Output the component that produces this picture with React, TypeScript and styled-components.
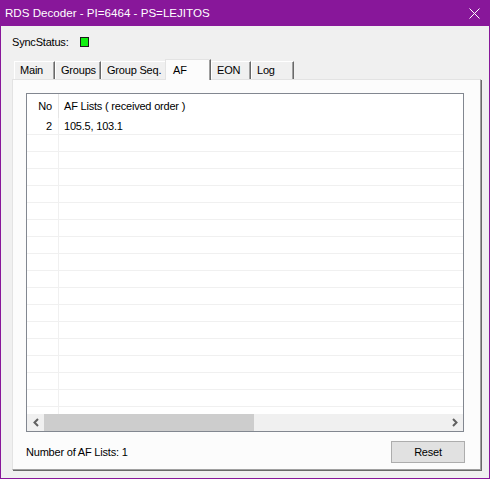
import React from 'react';
import styled, { createGlobalStyle } from 'styled-components';

const Global = createGlobalStyle`
  html, body { margin: 0; padding: 0; background: #f0f0f0; }
  body {
    font-family: "Liberation Sans", Arial, sans-serif;
    font-size: 11px;
    color: #000;
  }
  * { box-sizing: border-box; }
`;

const Window = styled.div`
  width: 490px;
  height: 479px;
  display: flex;
  flex-direction: column;
  border: 1px solid #88179a;
  border-top: none;
  background: #f0f0f0;
`;

const TitleBar = styled.div`
  height: 26px;
  flex: none;
  display: flex;
  align-items: center;
  justify-content: space-between;
  padding: 0 9px 0 4px;
  background: #88179a;
  color: #fff;
  font-size: 11.6px;
`;

const TitleText = styled.span`
  line-height: 26px;
  white-space: nowrap;
`;

const CloseIcon = styled.svg`
  display: block;
  width: 11px;
  height: 11px;
`;

const Client = styled.div`
  flex: 1;
  display: flex;
  flex-direction: column;
  padding: 8px 0 0 0;
`;

const SyncRow = styled.div`
  display: flex;
  align-items: center;
  height: 15px;
  padding-left: 11px;
`;

const Label = styled.span`
  letter-spacing: -0.2px;
  white-space: nowrap;
`;

const SyncLabel = styled(Label)`
  width: 68px;
`;

const Led = styled.div<{ $on: boolean }>`
  width: 9px;
  height: 10px;
  border: 1px solid #1a1a1a;
  background: ${(p) => (p.$on ? '#10f010' : '#c00000')};
`;

const TabStrip = styled.div`
  display: flex;
  align-items: flex-end;
  height: 20px;
  margin: 10px 0 0 13px;
  position: relative;
  z-index: 1;
`;

const Tab = styled.div<{ $w: number; $active?: boolean }>`
  width: ${(p) => p.$w}px;
  height: ${(p) => (p.$active ? 21 : 18)}px;
  margin-left: ${(p) => (p.$active ? -2 : 0)}px;
  margin-bottom: ${(p) => (p.$active ? -1 : 0)}px;
  padding: ${(p) => (p.$active ? '2px 0 0 7px' : '0 0 0 5px')};
  line-height: 17px;
  letter-spacing: -0.2px;
  white-space: nowrap;
  background: ${(p) => (p.$active ? '#fcfcfc' : '#f0f0f0')};
  border-top: 1px solid ${(p) => (p.$active ? '#e3e3e3' : '#ffffff')};
  border-left: 1px solid ${(p) => (p.$active ? '#e3e3e3' : '#ffffff')};
  border-right: 1px solid #696969;
  box-shadow: inset -1px 0 0 #a0a0a0;
`;

const Panel = styled.div`
  margin-left: 11px;
  width: 469px;
  height: 391px;
  background: #fcfcfc;
  border-top: 1px solid #e3e3e3;
  border-left: 1px solid #e3e3e3;
  border-right: 1px solid #a0a0a0;
  border-bottom: 1px solid #a0a0a0;
  box-shadow: 1px 1px 0 #696969;
  padding: 13px 0 0 13px;
  display: flex;
  flex-direction: column;
`;

const ListView = styled.div`
  width: 438px;
  height: 339px;
  border: 1px solid #828790;
  background: #fff;
  display: flex;
  flex-direction: column;
  overflow: hidden;
`;

const HeaderRow = styled.div`
  display: grid;
  grid-template-columns: 32px 1fr;
  height: 24px;
  flex: none;
`;

const HeaderCell = styled.div<{ $right?: boolean; $divider?: boolean }>`
  line-height: 24px;
  white-space: nowrap;
  letter-spacing: -0.2px;
  text-align: ${(p) => (p.$right ? 'right' : 'left')};
  padding: ${(p) => (p.$right ? '0 6px 0 0' : '0 0 0 5px')};
  border-right: ${(p) => (p.$divider ? '1px solid #e5e5e5' : 'none')};
`;

const Rows = styled.div`
  flex: 1;
  overflow: hidden;
`;

const Row = styled.div`
  display: grid;
  grid-template-columns: 32px 1fr;
  height: 17px;
  border-bottom: 1px solid #f0f0f0;
`;

const Cell = styled.div<{ $right?: boolean; $divider?: boolean }>`
  line-height: 17px;
  white-space: nowrap;
  letter-spacing: -0.2px;
  text-align: ${(p) => (p.$right ? 'right' : 'left')};
  padding: ${(p) => (p.$right ? '0 6px 0 0' : '0 0 0 5px')};
  border-right: ${(p) => (p.$divider ? '1px solid #f0f0f0' : 'none')};
`;

const HScroll = styled.div`
  height: 17px;
  flex: none;
  display: flex;
  background: #f0f0f0;
`;

const ScrollBtn = styled.div`
  width: 17px;
  height: 17px;
  display: flex;
  align-items: center;
  justify-content: center;
  flex: none;
`;

const Track = styled.div`
  flex: 1;
  display: flex;
  align-items: stretch;
`;

const Thumb = styled.div`
  width: 210px;
  background: #cdcdcd;
`;

const Footer = styled.div`
  width: 439px;
  margin-top: 9px;
  height: 22px;
  display: flex;
  align-items: center;
  justify-content: space-between;
`;

const Button = styled.button`
  width: 74px;
  height: 22px;
  background: #e1e1e1;
  border: 1px solid #adadad;
  border-radius: 0;
  padding: 0 0 1px 0;
  font-family: "Liberation Sans", Arial, sans-serif;
  font-size: 11px;
  letter-spacing: -0.2px;
  color: #000;
`;

const Chevron = ({ dir }: { dir: 'left' | 'right' }) => (
  <svg width="8" height="9" viewBox="0 0 8 9">
    <polyline
      points={dir === 'left' ? '6,1 2.5,4.5 6,8' : '2,1 5.5,4.5 2,8'}
      fill="none"
      stroke="#606060"
      strokeWidth="2"
    />
  </svg>
);

const tabs = [
  { label: 'Main', w: 41 },
  { label: 'Groups', w: 46 },
  { label: 'Group Seq.', w: 66 },
  { label: 'AF', w: 46, active: true },
  { label: 'EON', w: 40 },
  { label: 'Log', w: 43 },
];

const data: { no: string; af: string }[] = [{ no: '2', af: '105.5, 103.1' }];
const rows = Array.from({ length: 18 }, (_, i) => data[i] ?? { no: '', af: '' });

export default function App() {
  return (
    <>
      <Global />
      <Window>
        <TitleBar>
          <TitleText>RDS Decoder - PI=6464 - PS=LEJITOS</TitleText>
          <CloseIcon viewBox="0 0 11 11">
            <path d="M0.5 0.5 L10.5 10.5 M10.5 0.5 L0.5 10.5" stroke="#fff" strokeWidth="1" />
          </CloseIcon>
        </TitleBar>
        <Client>
          <SyncRow>
            <SyncLabel>SyncStatus:</SyncLabel>
            <Led $on />
          </SyncRow>
          <TabStrip>
            {tabs.map((t) => (
              <Tab key={t.label} $w={t.w} $active={t.active}>
                {t.label}
              </Tab>
            ))}
          </TabStrip>
          <Panel>
            <ListView>
              <HeaderRow>
                <HeaderCell $right $divider>No</HeaderCell>
                <HeaderCell>AF Lists ( received order )</HeaderCell>
              </HeaderRow>
              <Rows>
                {rows.map((r, i) => (
                  <Row key={i}>
                    <Cell $right $divider>{r.no}</Cell>
                    <Cell>{r.af}</Cell>
                  </Row>
                ))}
              </Rows>
              <HScroll>
                <ScrollBtn><Chevron dir="left" /></ScrollBtn>
                <Track><Thumb /></Track>
                <ScrollBtn><Chevron dir="right" /></ScrollBtn>
              </HScroll>
            </ListView>
            <Footer>
              <Label>Number of AF Lists: 1</Label>
              <Button>Reset</Button>
            </Footer>
          </Panel>
        </Client>
      </Window>
    </>
  );
}
